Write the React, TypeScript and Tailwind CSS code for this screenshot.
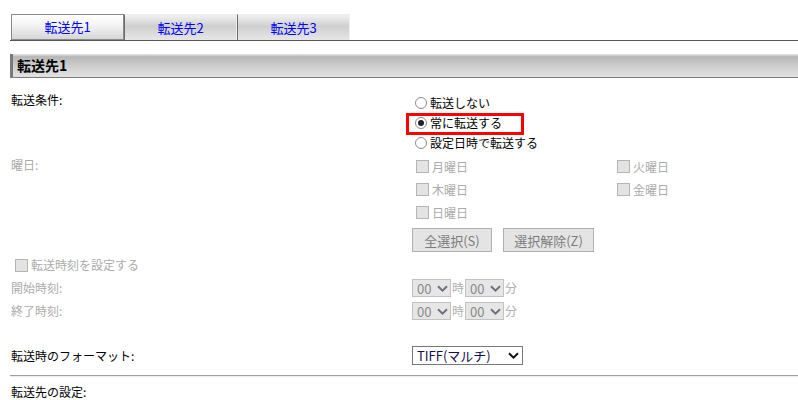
import React from "react";

const font = "font-['Noto_Sans_CJK_JP',sans-serif]";

function Chevron({ color }: { color: string }) {
  return (
    <svg width="11" height="7" viewBox="0 0 11 7" className="shrink-0">
      <path d="M1 1.2 L5.5 5.6 L10 1.2" fill="none" stroke={color} strokeWidth="2" />
    </svg>
  );
}

function Radio({ checked, label }: { checked?: boolean; label: string }) {
  return (
    <div className="flex h-[20px] items-center">
      <span className="ml-[3px] mr-[3px] flex h-[12px] w-[12px] items-center justify-center rounded-full border border-[#8a8a8a] bg-white">
        {checked && <span className="h-[6px] w-[6px] rounded-full bg-[#222]" />}
      </span>
      <span className="text-[12px] leading-[20px] text-black">{label}</span>
    </div>
  );
}

function Check({ label }: { label: string }) {
  return (
    <div className="flex h-[23px] items-center">
      <span className="mr-[3px] h-[13px] w-[13px] border border-[#b4b4b4] bg-[#e3e3e3]" />
      <span className="text-[12px] leading-none text-[#ababab]">{label}</span>
    </div>
  );
}

function MiniSelect() {
  return (
    <span className="flex h-[18px] w-[39px] items-center justify-between border border-[#c2c2c2] bg-[#e6e6e6] pl-[4px] pr-[2px] text-[13px] leading-none text-[#8a8a8a]">
      00
      <Chevron color="#6f6f80" />
    </span>
  );
}

function TimeRow({ label }: { label: string }) {
  return (
    <div className="flex">
      <div className="w-[402px] shrink-0 pl-[1px] text-[12px] leading-[18px] text-[#ababab]">{label}</div>
      <div className="flex items-center text-[12px] leading-none text-[#b0b0b0]">
        <MiniSelect />
        <span className="mx-[1px]">時</span>
        <MiniSelect />
        <span className="ml-[1px]">分</span>
      </div>
    </div>
  );
}

export default function App() {
  const tabs = ["転送先1", "転送先2", "転送先3"];

  return (
    <div className={`${font} h-[400px] w-[798px] overflow-hidden bg-white pl-[10px] pt-[14px]`}>
      {/* Tabs */}
      <div className="flex h-[27px] border-b border-[#555]">
        <div className="ml-[1px] flex">
          {tabs.map((t, i) => (
            <div
              key={t}
              className={
                i === 0
                  ? "flex h-[26px] w-[113px] items-center justify-center border border-[#8a8a8a] bg-[linear-gradient(to_bottom,#ffffff_0%,#f4f4f4_40%,#d6d6d6_100%)] text-[13px] text-[#0000ff]"
                  : "flex h-[26px] w-[113px] items-center justify-center border-l border-l-[#6a6a6a] border-t border-t-[#eeeeee] border-r border-r-[#f0f0f0] bg-[linear-gradient(to_bottom,#f2f2f2_0%,#cfcfcf_45%,#e6e6e6_100%)] text-[13px] text-[#0000ff]"
              }
            >
              {t}
            </div>
          ))}
        </div>
      </div>

      {/* Section header */}
      <div className="mt-[13px] flex h-[24px] items-center border-b border-l-[3px] border-b-[#7a7a7a] border-l-[#7a7a7a] bg-[linear-gradient(to_bottom,#e8e8e8_0%,#b6b6b6_12%,#cdcdcd_50%,#e2e2e2_100%)] pl-[4px] text-[14px] font-bold text-black">
        転送先1
      </div>

      {/* 転送条件 */}
      <div className="mt-[15px] flex">
        <div className="w-[402px] shrink-0 pl-[1px] text-[12px] leading-[14px] text-black">転送条件:</div>
        <div className="relative">
          <Radio label="転送しない" />
          <Radio checked label="常に転送する" />
          <Radio label="設定日時で転送する" />
          <div className="pointer-events-none absolute left-[-6px] top-[20px] h-[22px] w-[118px] border-[3px] border-[#ff0000]" />
        </div>
      </div>

      {/* 曜日 */}
      <div className="mt-[2px] flex">
        <div className="w-[402px] shrink-0 pl-[1px] text-[12px] leading-[20px] text-[#ababab]">曜日:</div>
        <div>
          <div className="grid grid-cols-[201px_auto] pl-[4px]">
            <Check label="月曜日" />
            <Check label="火曜日" />
            <Check label="木曜日" />
            <Check label="金曜日" />
            <Check label="日曜日" />
          </div>
          <div className="mt-[4px] flex gap-[11px]">
            <button className="h-[24px] w-[80px] border border-[#b0b0b0] bg-[#e4e4e4] text-[13px] leading-none text-[#7c7c7c]">
              全選択(S)
            </button>
            <button className="h-[24px] w-[91px] border border-[#b0b0b0] bg-[#e4e4e4] text-[13px] leading-none text-[#7c7c7c]">
              選択解除(Z)
            </button>
          </div>
        </div>
      </div>

      {/* 転送時刻を設定する */}
      <div className="mt-[3px] flex h-[20px] items-center pl-[5px]">
        <span className="mr-[3px] h-[13px] w-[13px] border border-[#b4b4b4] bg-[#e3e3e3]" />
        <span className="text-[12px] leading-none text-[#ababab]">転送時刻を設定する</span>
      </div>

      <div className="mt-[4px]">
        <TimeRow label="開始時刻:" />
      </div>
      <div className="mt-[5px]">
        <TimeRow label="終了時刻:" />
      </div>

      {/* フォーマット */}
      <div className="mt-[26px] flex items-center">
        <div className="w-[402px] shrink-0 pl-[1px] text-[12px] leading-[18px] text-black">転送時のフォーマット:</div>
        <div className="flex h-[19px] w-[111px] items-center justify-between border border-[#777] bg-white pl-[4px] pr-[3px] text-[13px] leading-none text-[#10104a]">
          TIFF(マルチ)
          <Chevron color="#111" />
        </div>
      </div>

      <div className="mt-[10px] border-t border-b border-t-[#a0a0a0] border-b-[#ececec]" />

      <div className="mt-[5px] pl-[1px] text-[12px] leading-[20px] text-black">転送先の設定:</div>
    </div>
  );
}
